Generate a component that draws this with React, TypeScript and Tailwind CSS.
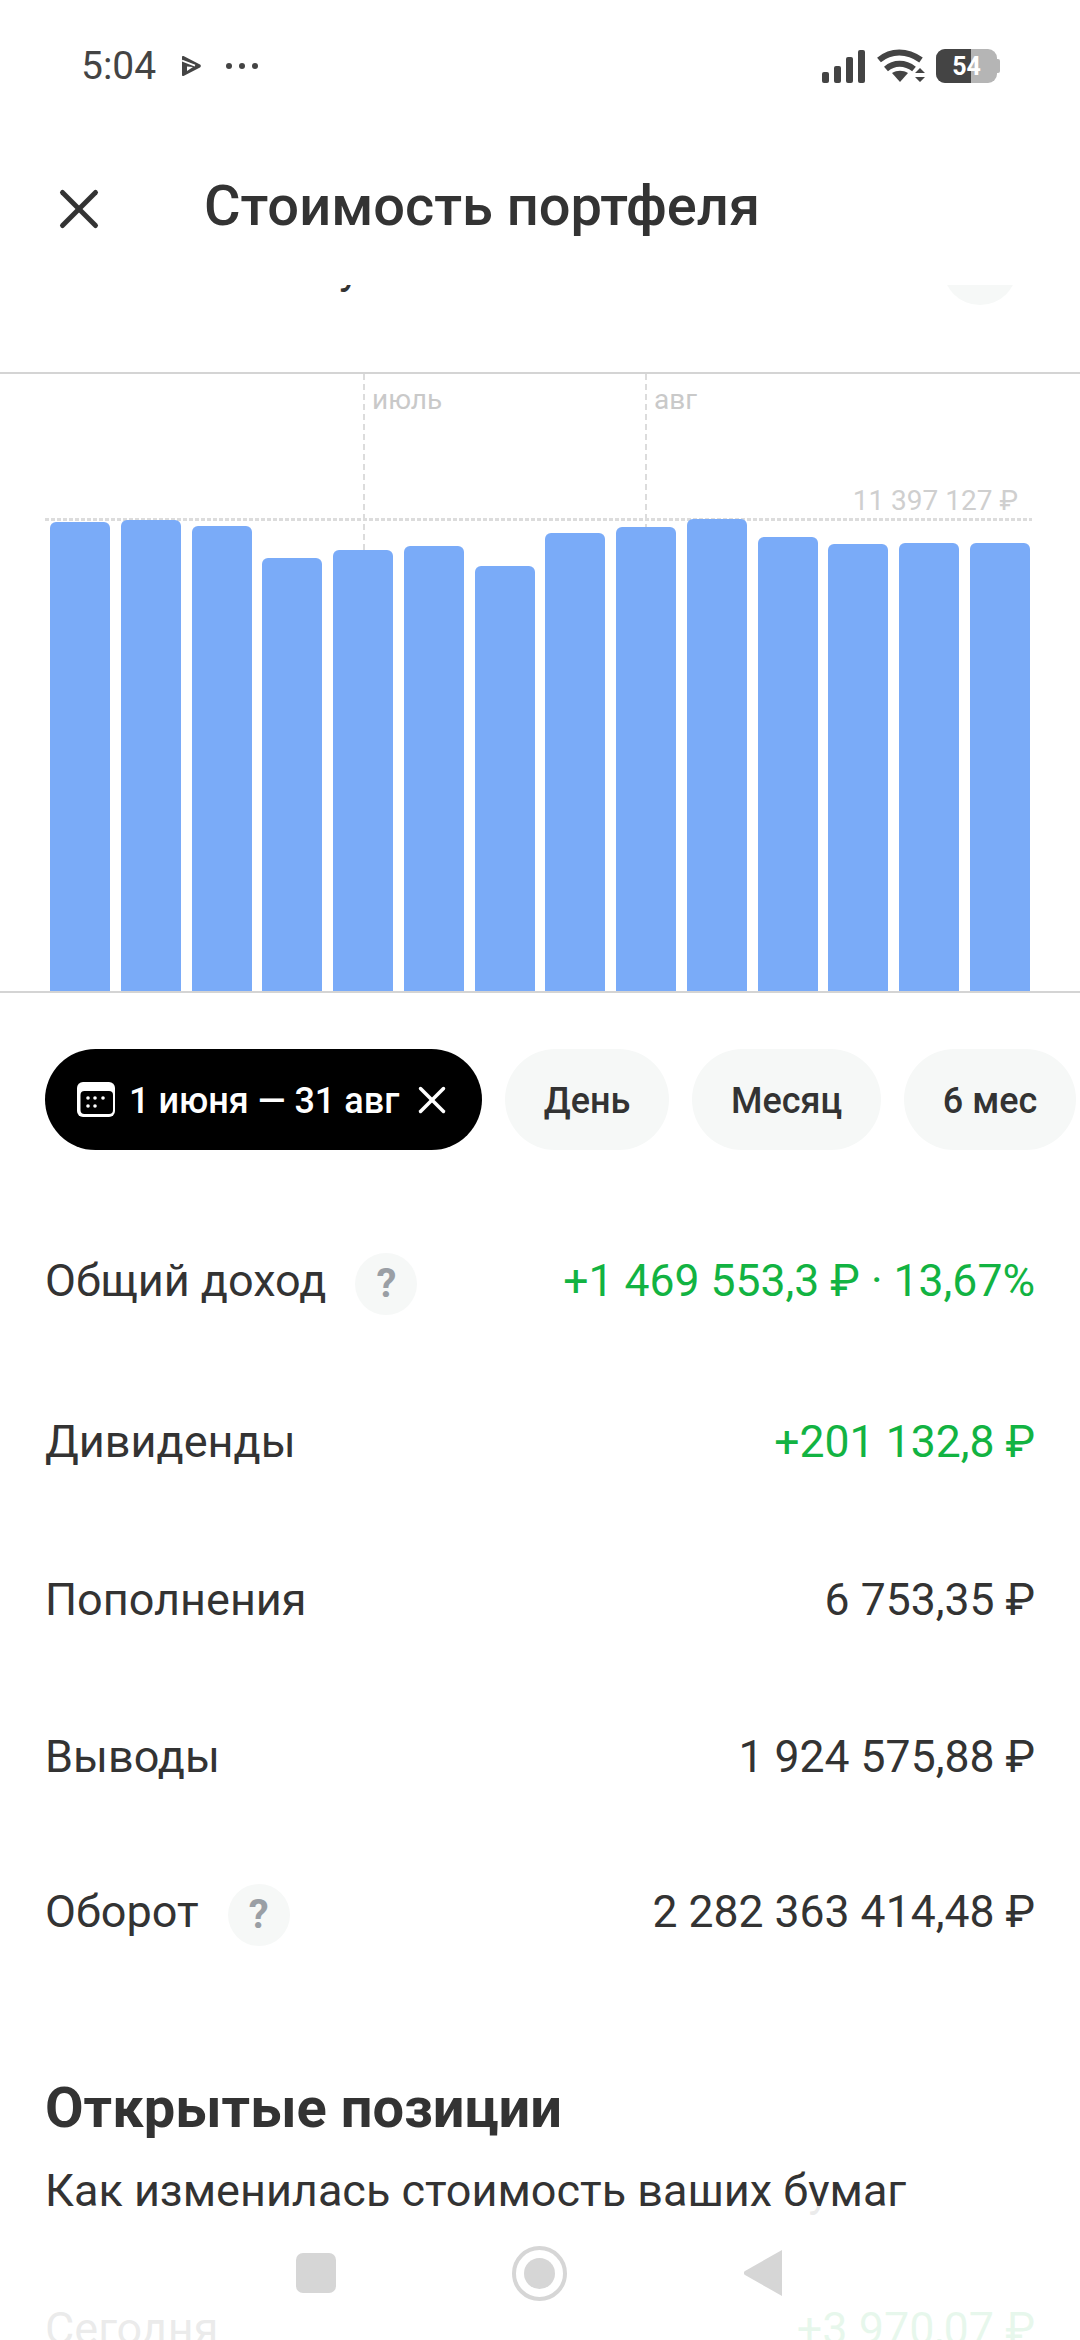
import { X } from "lucide-react";

const bars = [522, 520, 526, 558, 550, 546, 566, 533, 527, 519, 537, 544, 543, 543];

const rows = [
  { label: "Общий доход", value: "+1 469 553,3 ₽ · 13,67%", green: true, hint: true, top: "mt-[100px]" },
  { label: "Дивиденды", value: "+201 132,8 ₽", green: true, top: "mt-[99px]" },
  { label: "Пополнения", value: "6 753,35 ₽", top: "mt-[96px]" },
  { label: "Выводы", value: "1 924 575,88 ₽", top: "mt-[95px]" },
  { label: "Оборот", value: "2 282 363 414,48 ₽", hint: true, top: "mt-[93px]" },
];

function StatusBar() {
  return (
    <div className="flex h-[132px] items-center pl-[81px] pr-[80px] text-[#444444]">
      <span className="text-[39px] leading-none">5:04</span>
      <svg viewBox="0 0 19 20" className="ml-[26px] h-[20px] w-[19px]" fill="#444444">
        <path d="M1.5 0 18 8.6a1.6 1.6 0 0 1 0 2.8L1.5 20A1.2 1.2 0 0 1 0 19V1A1.2 1.2 0 0 1 1.5 0z" />
        <path d="M0 4.5 13 9.6" stroke="white" strokeWidth="1.8" />
        <path d="M5 10.5 11 11 5 15z" fill="white" />
      </svg>
      <div className="ml-[25px] flex gap-[7px]">
        <span className="h-[6px] w-[6px] rounded-full bg-[#444444]" />
        <span className="h-[6px] w-[6px] rounded-full bg-[#444444]" />
        <span className="h-[6px] w-[6px] rounded-full bg-[#444444]" />
      </div>
      <div className="ml-auto flex items-end gap-[5px]">
        <span className="h-[11px] w-[7px] rounded-[2px] bg-[#444444]" />
        <span className="h-[17px] w-[7px] rounded-[2px] bg-[#444444]" />
        <span className="h-[26px] w-[7px] rounded-[2px] bg-[#444444]" />
        <span className="h-[33px] w-[7px] rounded-[2px] bg-[#444444]" />
      </div>
      <svg viewBox="0 0 48 34" className="ml-[12px] h-[34px] w-[48px]" fill="none" stroke="#444444" strokeWidth="6">
        <path d="M2 11C14 1 30 1 44 11" />
        <path d="M9 20c8-7 19-7 28 0" />
        <path d="M15 24 23 33 31 24c-5-3-11-3-16 0z" fill="#444444" stroke="none" />
        <path d="M38 24h10l-5-5zM38 28h10l-5 5z" fill="#444444" stroke="none" />
      </svg>
      <div className="ml-[11px] flex items-center">
        <div className="relative flex h-[34px] w-[61px] overflow-hidden rounded-[9px] bg-[#b5b5b5]">
          <div className="h-full w-[35px] bg-[#444444]" />
          <span className="absolute inset-0 flex items-center justify-center text-[25px] font-bold leading-none text-white">54</span>
        </div>
        <span className="h-[14px] w-[3px] rounded-r-[2px] bg-[#b5b5b5]" />
      </div>
    </div>
  );
}

function Chip({ label, width }: { label: string; width: string }) {
  return (
    <div className={`flex h-[101px] shrink-0 items-center justify-center rounded-full bg-[#f6f8f7] pt-[3px] text-[36px] font-medium text-[#333333] ${width}`}>
      {label}
    </div>
  );
}

function Hint() {
  return (
    <span className="ml-[29px] mt-[6px] flex h-[62px] w-[62px] items-center justify-center rounded-full bg-[#f6f8f7] text-[40px] font-bold text-[#9a9fa5]">?</span>
  );
}

export default function App() {
  return (
    <div className="relative h-[2340px] w-[1080px] overflow-hidden bg-white font-['Roboto',sans-serif]">
      <StatusBar />

      <header className="flex h-[153px] items-center pl-[46px]">
        <X className="h-[66px] w-[66px] text-[#333333]" strokeWidth={1.8} />
        <h1 className="mb-[6px] ml-[92px] text-[56px] font-medium leading-none text-[#333333]">Стоимость портфеля</h1>
      </header>

      {/* scrolled content cut off under the header */}
      <div className="flex h-[87px] justify-between overflow-hidden pl-[339px] pr-[63px]">
        <span className="-mt-[47px] text-[45px] leading-[60px] text-[#333333]">у</span>
        <span className="-mt-[54px] h-[74px] w-[74px] rounded-full bg-[#f6f8f7]" />
      </div>

      <section className="relative h-[621px] border-y-2 border-[#d4d4d4]">
        <div className="absolute left-[363px] top-0 h-[180px] w-[2px] bg-[repeating-linear-gradient(180deg,#dcdcdc_0_6px,transparent_6px_10px)]" />
        <div className="absolute left-[645px] top-0 h-[155px] w-[2px] bg-[repeating-linear-gradient(180deg,#dcdcdc_0_6px,transparent_6px_10px)]" />
        <span className="absolute left-[372px] top-[8px] text-[28px] leading-[36px] text-[#c9c9c9]">июль</span>
        <span className="absolute left-[654px] top-[8px] text-[28px] leading-[36px] text-[#c9c9c9]">авг</span>
        <span className="absolute right-[62px] top-[109px] text-[28px] leading-[36px] text-[#cfcfcf]">11 397 127 ₽</span>
        <div className="absolute left-[45px] right-[48px] top-[144px] h-[3px] bg-[repeating-linear-gradient(90deg,#dcdcdc_0_4px,transparent_4px_6px)]" />
        <div className="absolute inset-x-[50px] bottom-0 flex items-end justify-between">
          {bars.map((top, i) => (
            <div
              key={i}
              className="w-[60px] rounded-t-[6px] bg-[#7aabf8]"
              style={{ height: 991 - top }}
            />
          ))}
        </div>
      </section>

      <div className="mt-[56px] flex gap-[23px] pl-[45px]">
        <div className="flex h-[101px] w-[437px] shrink-0 items-center rounded-full bg-black pl-[32px] text-[36px] font-medium text-white">
          <svg viewBox="0 0 38 35" className="h-[35px] w-[38px] shrink-0">
            <rect width="38" height="35" rx="6" fill="white" />
            <rect x="3.5" y="9" width="32.5" height="23" rx="4" fill="black" />
            <circle cx="11" cy="16" r="1.8" fill="white" />
            <circle cx="18" cy="16" r="1.8" fill="white" />
            <circle cx="26" cy="16" r="1.8" fill="white" />
            <circle cx="11" cy="24" r="1.8" fill="white" />
            <circle cx="18" cy="24" r="1.8" fill="white" />
          </svg>
          <span className="ml-[14px] whitespace-nowrap pt-[3px]">1 июня — 31 авг</span>
          <X className="ml-[10px] h-[46px] w-[46px] shrink-0" strokeWidth={1.8} />
        </div>
        <Chip label="День" width="w-[164px]" />
        <Chip label="Месяц" width="w-[189px]" />
        <Chip label="6 мес" width="w-[172px]" />
      </div>

      <div className="flex flex-col px-[45px]">
        {rows.map((row) => (
          <div key={row.label} className={`flex h-[62px] items-center text-[45px] text-[#333333] ${row.top}`}>
            <span>{row.label}</span>
            {row.hint && <Hint />}
            <span className={`ml-auto text-[44.5px] ${row.green ? "text-[#12b342]" : ""}`}>{row.value}</span>
          </div>
        ))}
      </div>

      <h2 className="mt-[137px] pl-[45px] text-[56px] font-bold leading-none text-[#333333]">Открытые позиции</h2>
      <p className="mt-[32px] pl-[45px] text-[45px] leading-none text-[#333333]">Как изменилась стоимость ваших бумаг</p>
      <div className="mt-[93px] flex justify-between px-[45px] text-[45px] leading-none text-[#333333]">
        <span>Сегодня</span>
        <span className="text-[#12b342]">+3 970,07 ₽</span>
      </div>

      {/* translucent navigation bar over the list */}
      <nav className="absolute inset-x-0 bottom-0 flex h-[134px] items-center bg-white/90 pl-[296px]">
        <span className="h-[40px] w-[40px] rounded-[7px] bg-[#d6d6d6]" />
        <span className="ml-[176px] flex h-[55px] w-[55px] items-center justify-center rounded-full border-[4px] border-[#d6d6d6]">
          <span className="h-[31px] w-[31px] rounded-full bg-[#d6d6d6]" />
        </span>
        <svg viewBox="0 0 38 48" className="ml-[177px] h-[48px] w-[38px]" fill="#d6d6d6">
          <path d="M38 1v46L1 26a2.4 2.4 0 0 1 0-4z" />
        </svg>
      </nav>
    </div>
  );
}
